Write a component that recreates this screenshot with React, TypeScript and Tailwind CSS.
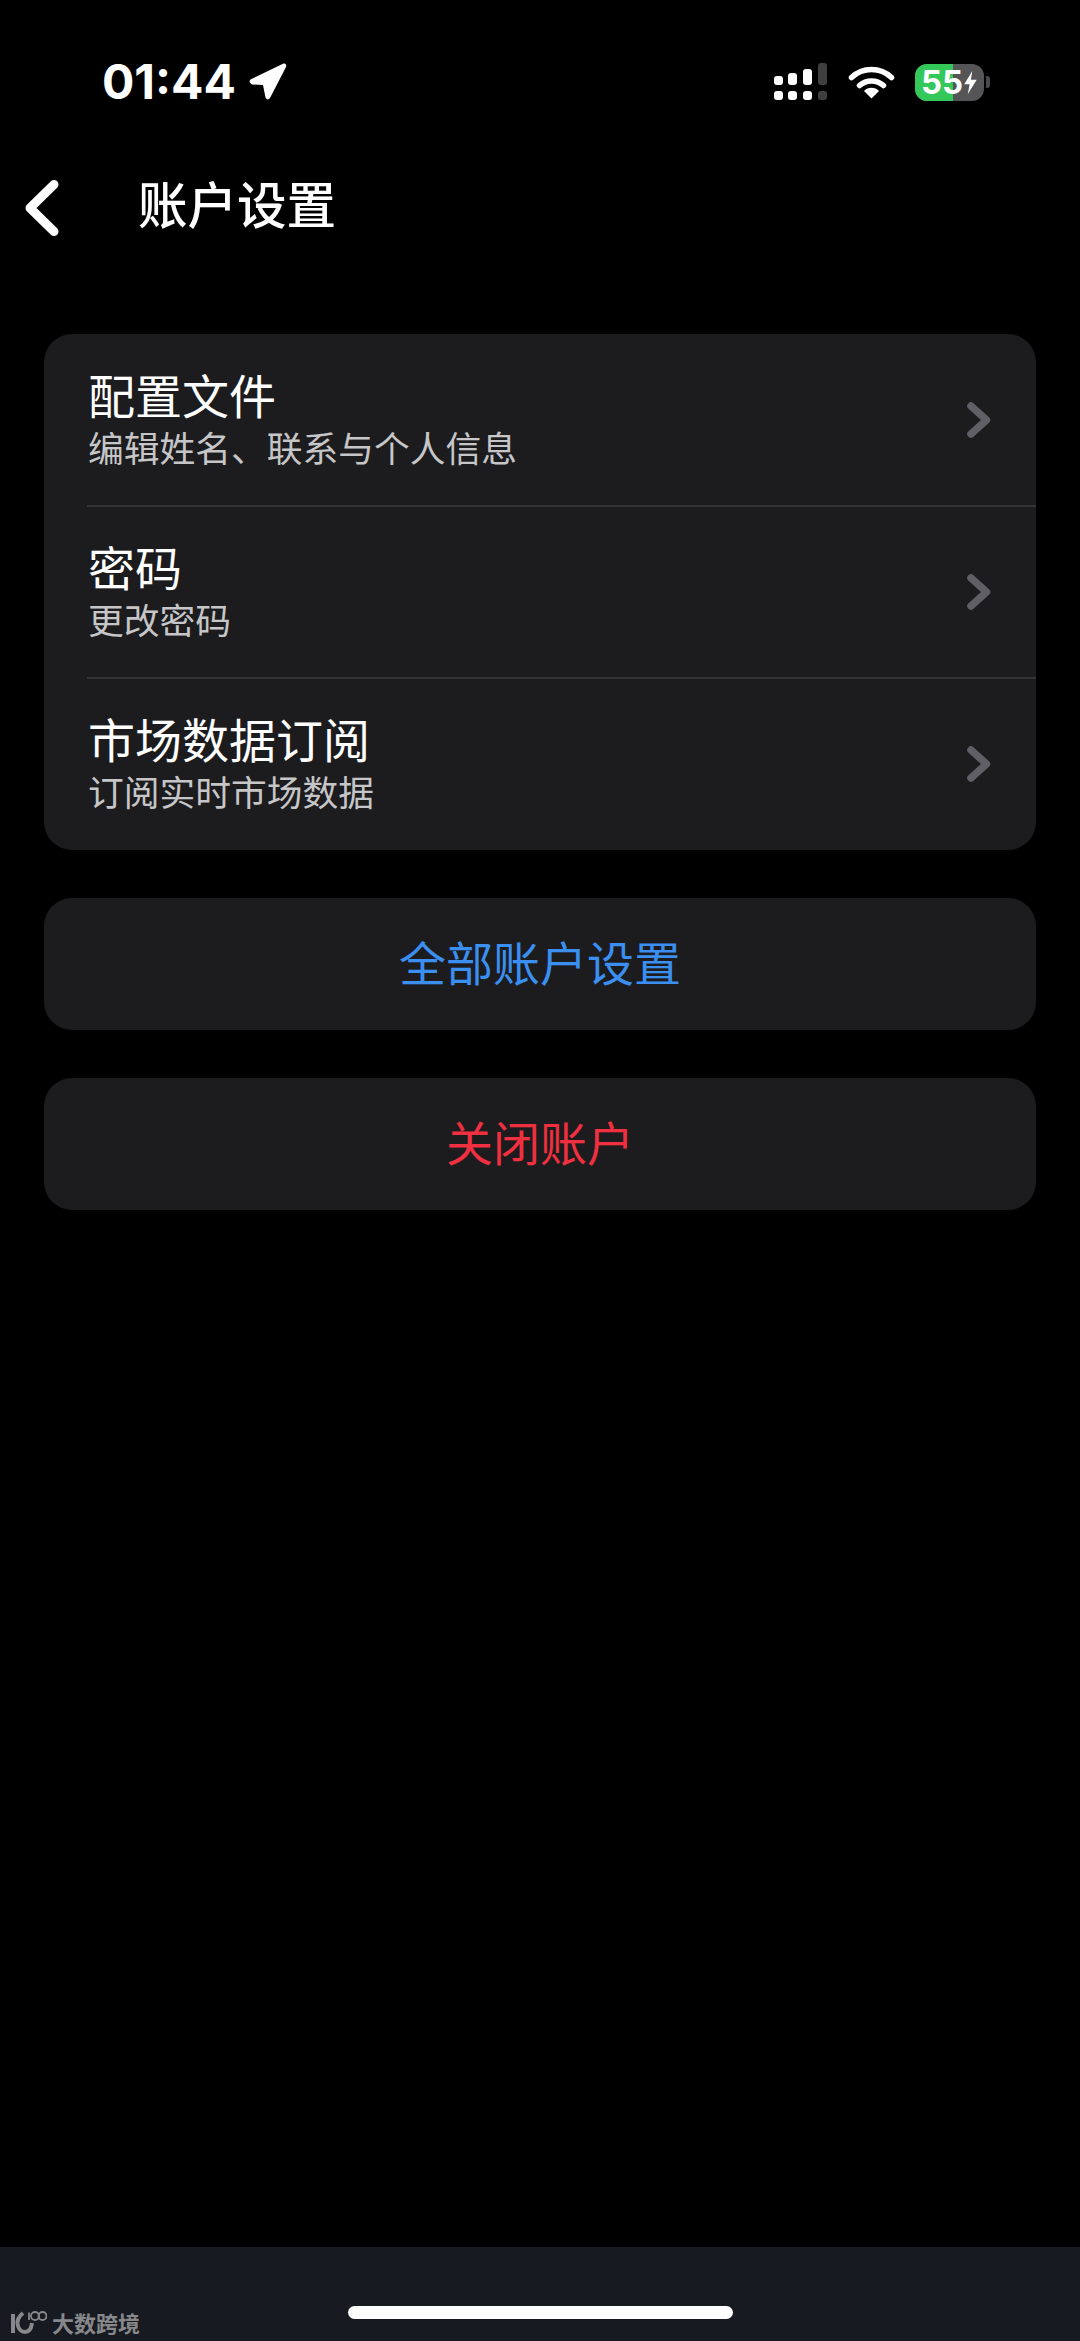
import React from "react";

const cjk = "font-['Noto_Sans_CJK_SC','Liberation_Sans',sans-serif]";

function Chevron() {
  return (
    <svg width="24" height="36" viewBox="0 0 24 36" fill="none" className="shrink-0">
      <path d="M4 4L19.5 18L4 32" stroke="#5f5f65" strokeWidth="7.5" strokeLinecap="round" strokeLinejoin="round" />
    </svg>
  );
}

function Row({ title, sub, divider }: { title: string; sub: string; divider?: boolean }) {
  return (
    <div className="relative h-[172px] pl-[44px] pr-[45px] flex items-center justify-between">
      <div className="flex flex-col -mt-[3px]">
        <span className="text-[47px] leading-[56px] text-white">{title}</span>
        <span className="text-[35.75px] leading-[50px] text-[#c6c6c8]">{sub}</span>
      </div>
      <Chevron />
      {divider && <div className="absolute left-[43px] right-0 -bottom-[1px] h-[2px] bg-[#333336]" />}
    </div>
  );
}

function ActionCard({ label, color }: { label: string; color: string }) {
  return (
    <div className={`h-[132px] pb-[6px] rounded-[28px] bg-[#1c1c1e] flex items-center justify-center text-[47px] ${color}`}>
      {label}
    </div>
  );
}

export default function App() {
  return (
    <div className={`w-[1080px] h-[2341px] bg-black flex flex-col overflow-hidden ${cjk}`}>
      {/* status bar */}
      <div className="h-[113px] shrink-0 flex items-end justify-between pl-[102px] pr-[90px] pb-[1px]">
        <div className="flex items-center gap-[12px] h-[60px]">
          <span className="font-['Inter',sans-serif] font-bold text-[48px] leading-none text-white">01:44</span>
          <svg width="40" height="40" viewBox="0 0 40 40" className="-mt-[2px]">
            <path d="M2.5 18.5L35.5 2.5Q39 2 38 6L22 37Q19.5 40 17.5 36.5L15 24L4 23.5Q0 21 2.5 18.5Z" fill="#fff" />
          </svg>
        </div>
        <div className="flex items-center h-[60px] gap-[20px]">
          <svg width="54" height="38" viewBox="0 0 54 38">
            <rect x="0" y="13" width="9" height="9" rx="3" fill="#fff" />
            <rect x="14" y="10" width="9" height="12" rx="3" fill="#fff" />
            <rect x="29" y="6" width="9" height="16" rx="3" fill="#fff" />
            <rect x="44" y="0" width="9" height="22" rx="3" fill="#3f3f3f" />
            <rect x="0" y="28" width="9" height="9" rx="3" fill="#fff" />
            <rect x="14" y="28" width="9" height="9" rx="3" fill="#fff" />
            <rect x="29" y="28" width="9" height="9" rx="3" fill="#fff" />
            <rect x="44" y="28" width="9" height="9" rx="3" fill="#3f3f3f" />
          </svg>
          <svg width="47" height="34" viewBox="0 0 46 34">
            <path d="M3 12.5A29 29 0 0 1 43 12.5" stroke="#fff" strokeWidth="5.5" fill="none" strokeLinecap="round" />
            <path d="M11 20.5A18 18 0 0 1 35 20.5" stroke="#fff" strokeWidth="5.5" fill="none" strokeLinecap="round" />
            <path d="M15.5 26A10.5 10.5 0 0 1 30.5 26L23 33.5Z" fill="#fff" />
          </svg>
          <div className="flex items-center gap-[2px]">
            <div className="relative w-[69px] h-[37px] rounded-[12px] bg-[#555557] flex items-center">
              <div className="absolute left-0 top-0 bottom-0 w-[38px] rounded-l-[12px] bg-[#34c759]" />
              <span className="relative pl-[6px] font-['Inter',sans-serif] font-bold text-[33px] leading-none text-white">55</span>
              <svg width="15" height="25" viewBox="0 0 16 28" className="relative">
                <path d="M10 1L1 16H7L5 27L15 11H8.5Z" fill="#fff" />
              </svg>
            </div>
            <div className="w-[4px] h-[12px] rounded-r-[3px] bg-[#4a4a4c]" />
          </div>
        </div>
      </div>

      {/* navigation */}
      <div className="h-[110px] shrink-0 flex items-center pl-[24px] mt-[40px]">
        <svg width="36" height="56" viewBox="0 0 36 56" fill="none">
          <path d="M30 4.5L6 28L30 51.5" stroke="#fff" strokeWidth="9" strokeLinecap="round" strokeLinejoin="round" />
        </svg>
        <span className="ml-[78px] -mt-[10px] text-[49.5px] font-medium text-white leading-none">账户设置</span>
      </div>

      {/* settings groups */}
      <div className="px-[44px] pt-[71px] flex flex-col gap-[48px]">
        <div className="rounded-[28px] bg-[#1c1c1e] overflow-hidden">
          <Row title="配置文件" sub="编辑姓名、联系与个人信息" divider />
          <Row title="密码" sub="更改密码" divider />
          <Row title="市场数据订阅" sub="订阅实时市场数据" />
        </div>
        <ActionCard label="全部账户设置" color="text-[#3b8ff0]" />
        <ActionCard label="关闭账户" color="text-[#f03040]" />
      </div>

      {/* bottom bar */}
      <div className="relative mt-auto h-[94px] shrink-0 bg-[#171a21] flex justify-center">
        <div className="mt-[59px] w-[385px] h-[13px] rounded-full bg-white" />
        <div className="absolute left-[10px] bottom-[7px] flex items-center gap-[5px]">
          <svg width="37" height="24" viewBox="0 0 37 24" fill="none" stroke="#87888b">
            <path d="M3 4V23" strokeWidth="4" />
            <path d="M13 3Q7 8 7.5 14Q9 22 15 22Q21 22 22 13" strokeWidth="4" />
            <path d="M19 2.5V10" strokeWidth="1.8" />
            <circle cx="25" cy="6" r="4" strokeWidth="1.8" />
            <circle cx="32.5" cy="6" r="4" strokeWidth="1.8" />
          </svg>
          <span className="text-[22px] leading-none font-bold text-[#87888b]">大数跨境</span>
        </div>
      </div>
    </div>
  );
}
